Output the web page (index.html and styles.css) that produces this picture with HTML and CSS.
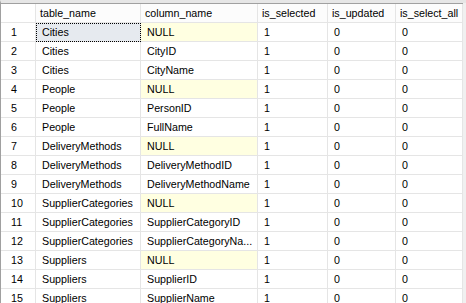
FILE: index.html
```html
<!DOCTYPE html>
<html>
<head>
<meta charset="utf-8">
<link rel="stylesheet" href="styles.css">
</head>
<body>
<div class="frame">
  <div class="grid">
    <div class="hd rn"></div>
    <div class="hd">table_name</div>
    <div class="hd">column_name</div>
    <div class="hd">is_selected</div>
    <div class="hd">is_updated</div>
    <div class="hd">is_select_all</div>

    <div class="rn">1</div><div class="c sel">Cities</div><div class="c null">NULL</div><div class="c">1</div><div class="c">0</div><div class="c">0</div>
    <div class="rn">2</div><div class="c">Cities</div><div class="c">CityID</div><div class="c">1</div><div class="c">0</div><div class="c">0</div>
    <div class="rn">3</div><div class="c">Cities</div><div class="c">CityName</div><div class="c">1</div><div class="c">0</div><div class="c">0</div>
    <div class="rn">4</div><div class="c">People</div><div class="c null">NULL</div><div class="c">1</div><div class="c">0</div><div class="c">0</div>
    <div class="rn">5</div><div class="c">People</div><div class="c">PersonID</div><div class="c">1</div><div class="c">0</div><div class="c">0</div>
    <div class="rn">6</div><div class="c">People</div><div class="c">FullName</div><div class="c">1</div><div class="c">0</div><div class="c">0</div>
    <div class="rn">7</div><div class="c">DeliveryMethods</div><div class="c null">NULL</div><div class="c">1</div><div class="c">0</div><div class="c">0</div>
    <div class="rn">8</div><div class="c">DeliveryMethods</div><div class="c">DeliveryMethodID</div><div class="c">1</div><div class="c">0</div><div class="c">0</div>
    <div class="rn">9</div><div class="c">DeliveryMethods</div><div class="c">DeliveryMethodName</div><div class="c">1</div><div class="c">0</div><div class="c">0</div>
    <div class="rn">10</div><div class="c">SupplierCategories</div><div class="c null">NULL</div><div class="c">1</div><div class="c">0</div><div class="c">0</div>
    <div class="rn">11</div><div class="c">SupplierCategories</div><div class="c">SupplierCategoryID</div><div class="c">1</div><div class="c">0</div><div class="c">0</div>
    <div class="rn">12</div><div class="c">SupplierCategories</div><div class="c">SupplierCategoryNa...</div><div class="c">1</div><div class="c">0</div><div class="c">0</div>
    <div class="rn">13</div><div class="c">Suppliers</div><div class="c null">NULL</div><div class="c">1</div><div class="c">0</div><div class="c">0</div>
    <div class="rn">14</div><div class="c">Suppliers</div><div class="c">SupplierID</div><div class="c">1</div><div class="c">0</div><div class="c">0</div>
    <div class="rn">15</div><div class="c">Suppliers</div><div class="c">SupplierName</div><div class="c">1</div><div class="c">0</div><div class="c">0</div>
  </div>
</div>
</body>
</html>
```

FILE: styles.css
```css
html, body {
  margin: 0;
  padding: 0;
  background: #f0f0f0;
  overflow: hidden;
}
.frame {
  width: 466px;
  height: 303px;
  box-sizing: border-box;
  border-top: 3px solid #e6e6e6;
  border-left: 1px solid #a0a0a0;
  overflow: hidden;
  background: #f0f0f0;
  font-family: "Liberation Sans", Arial, sans-serif;
  font-size: 10.7px;
  color: #000;
}
.grid {
  display: grid;
  grid-template-columns: 35px 105px 117px 70px 68px 67px;
  grid-auto-rows: 19px;
  width: 462px;
  background: #fff;
  border-top: 1px solid #a0a0a0;
}
.grid > div {
  box-sizing: border-box;
  border-right: 1px solid #e5e5e5;
  border-bottom: 1px solid #e5e5e5;
  line-height: 18px;
  white-space: nowrap;
  overflow: hidden;
}
.hd {
  background: #fcfcfc;
  padding-left: 4px;
  line-height: 19px;
}
.rn {
  background: #fff;
  padding-left: 10px;
}
.c {
  padding-left: 6px;
}
.null {
  background: #ffffe1;
}
.sel {
  background: #e6eaef;
  outline: 1px dotted #000;
  outline-offset: -1px;
}
```
